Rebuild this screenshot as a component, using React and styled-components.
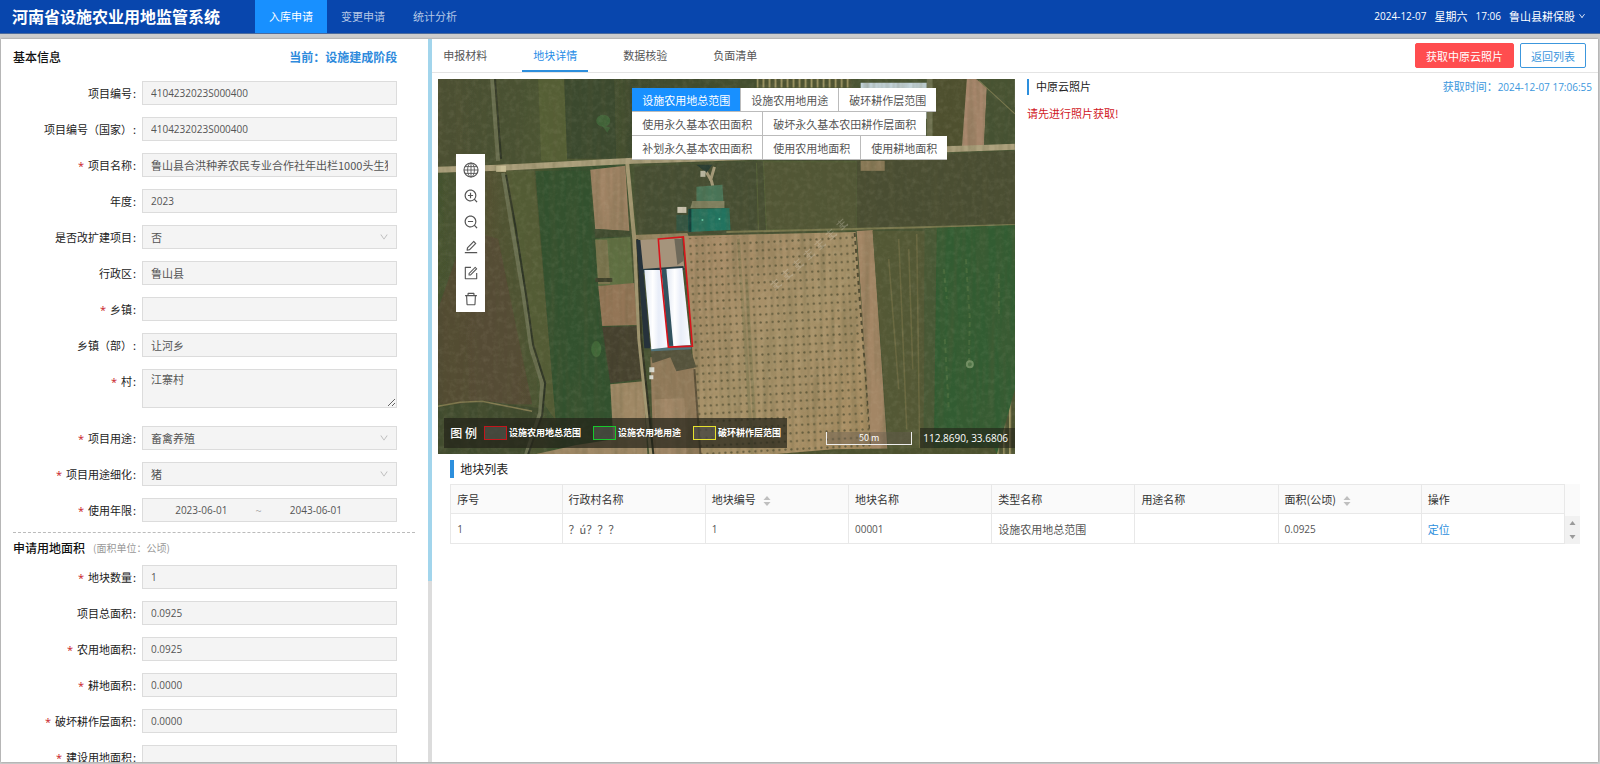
import React from 'react';
import styled, { createGlobalStyle, css } from 'styled-components';
import {
  AiOutlineZoomIn,
  AiOutlineZoomOut,
  AiOutlineEdit,
  AiOutlineForm,
  AiOutlineDelete,
  AiOutlineDown,
} from 'react-icons/ai';

const baseFields = [
  { id: 'code', label: '项目编号', value: '4104232023S000400', numeric: true },
  { id: 'stateCode', label: '项目编号（国家）', value: '4104232023S000400', numeric: true },
  { id: 'name', label: '项目名称', value: '鲁山县合洪种养农民专业合作社年出栏1000头生猪养殖项目', required: true },
  { id: 'year', label: '年度', value: '2023', numeric: true },
  { id: 'rebuild', label: '是否改扩建项目', value: '否', type: 'select' },
  { id: 'district', label: '行政区', value: '鲁山县' },
  { id: 'town', label: '乡镇', value: '', required: true },
  { id: 'townDept', label: '乡镇（部）', value: '让河乡' },
  { id: 'village', label: '村', value: '江寨村', required: true, type: 'textarea' },
  { id: 'usage', label: '项目用途', value: '畜禽养殖', required: true, type: 'select' },
  { id: 'usageDetail', label: '项目用途细化', value: '猪', required: true, type: 'select' },
  { id: 'period', label: '使用年限', value: ['2023-06-01', '2043-06-01'], required: true, type: 'range' },
];

const areaFields = [
  { id: 'count', label: '地块数量', value: '1', required: true, numeric: true },
  { id: 'total', label: '项目总面积', value: '0.0925', numeric: true },
  { id: 'farm', label: '农用地面积', value: '0.0925', required: true, numeric: true },
  { id: 'plough', label: '耕地面积', value: '0.0000', required: true, numeric: true },
  { id: 'damage', label: '破坏耕作层面积', value: '0.0000', required: true, numeric: true },
  { id: 'build', label: '建设用地面积', value: '', required: true, numeric: true },
];

const menus = ['入库申请', '变更申请', '统计分析'];
const tabs = ['申报材料', '地块详情', '数据核验', '负面清单'];

const layerRows = [
  ['设施农用地总范围', '设施农用地用途', '破环耕作层范围'],
  ['使用永久基本农田面积', '破坏永久基本农田耕作层面积'],
  ['补划永久基本农田面积', '使用农用地面积', '使用耕地面积'],
];

const legends = [
  { color: '#c3161c', text: '设施农用地总范围' },
  { color: '#18c82c', text: '设施农用地用途' },
  { color: '#e6e22e', text: '破环耕作层范围' },
];

const columns = [
  { title: '序号', width: '10%' },
  { title: '行政村名称' },
  { title: '地块编号', sorter: true },
  { title: '地块名称' },
  { title: '类型名称' },
  { title: '用途名称' },
  { title: '面积(公顷)', sorter: true },
  { title: '操作' },
];

const Globe = () => (
  <svg width="16" height="16" viewBox="0 0 16 16" fill="none" stroke="currentColor">
    <circle cx="8" cy="8" r="7" strokeWidth="1.2" />
    <ellipse cx="8" cy="8" rx="3.4" ry="7" strokeWidth="0.9" />
    <path d="M8 1v14M1 8h14M2 4.6h12M2 11.4h12" strokeWidth="0.9" />
  </svg>
);

const tools = [
  { name: '全图', icon: <Globe /> },
  { name: '放大', icon: <AiOutlineZoomIn /> },
  { name: '缩小', icon: <AiOutlineZoomOut /> },
  { name: '绘制', icon: <AiOutlineEdit /> },
  { name: '编辑', icon: <AiOutlineForm /> },
  { name: '删除', icon: <AiOutlineDelete /> },
];

const Satellite = () => (
  <SatelliteSvg viewBox="0 0 576 375" preserveAspectRatio="xMidYMid slice" aria-hidden="true">
    <defs>
      <linearGradient id="west" x1="0" x2="1" y1="0" y2="0">
        <stop offset="0" stopColor="#44532f" />
        <stop offset="0.25" stopColor="#525133" />
        <stop offset="0.5" stopColor="#4a5431" />
        <stop offset="0.62" stopColor="#35512e" />
        <stop offset="0.85" stopColor="#36502e" />
        <stop offset="1" stopColor="#435230" />
      </linearGradient>
      <linearGradient id="north" x1="0" x2="1" y1="0" y2="0">
        <stop offset="0" stopColor="#4c5030" />
        <stop offset="0.25" stopColor="#485131" />
        <stop offset="0.5" stopColor="#505a34" />
        <stop offset="0.6" stopColor="#3e4a2d" />
        <stop offset="1" stopColor="#434e2f" />
      </linearGradient>
      <linearGradient id="orchard" x1="0" x2="1" y1="0" y2="1">
        <stop offset="0" stopColor="#a98b67" />
        <stop offset="0.5" stopColor="#a79269" />
        <stop offset="1" stopColor="#aa8e63" />
      </linearGradient>
      <linearGradient id="roof" x1="0" x2="1" y1="0" y2="0">
        <stop offset="0" stopColor="#dfe6f2" />
        <stop offset="0.35" stopColor="#ffffff" />
        <stop offset="0.6" stopColor="#e8edf8" />
        <stop offset="1" stopColor="#fafcff" />
      </linearGradient>
      <pattern id="trees" width="6" height="8" patternUnits="userSpaceOnUse" patternTransform="rotate(-3)">
        <circle cx="3" cy="4" r="1.1" fill="#625a3c" />
      </pattern>
      <pattern id="rows" width="6" height="12" patternUnits="userSpaceOnUse">
        <rect width="6" height="12" fill="#4d5230" />
        <rect width="2" height="12" fill="#9d9564" />
      </pattern>
      <filter id="soft" x="0" y="0" width="100%" height="100%">
        <feGaussianBlur stdDeviation="0.6" />
      </filter>
      <filter id="streaks" x="0" y="0" width="100%" height="100%">
        <feTurbulence type="fractalNoise" baseFrequency="0.16 0.01" numOctaves="2" seed="4" />
        <feColorMatrix values="0 0 0 0 0.1  0 0 0 0 0.1  0 0 0 0 0.04  1.6 0 0 0 -0.6" />
      </filter>
      <filter id="grain" x="0" y="0" width="100%" height="100%">
        <feTurbulence type="fractalNoise" baseFrequency="0.18" numOctaves="3" seed="9" />
        <feColorMatrix values="0 0 0 0 0.85  0 0 0 0 0.8  0 0 0 0 0.6  0 1.4 0 0 -0.6" />
      </filter>
    </defs>
    <g filter="url(#soft)">
      <rect width="576" height="375" fill="#465232" />
      {/* fields north of the road */}
      <path d="M0 0h318v82L0 90z" fill="url(#north)" />
      <path d="M100 0h26l3 82h-26z" fill="#545f35" />
      <path d="M126 0h50l2 80h-49z" fill="#3b492e" />
      <ellipse cx="165" cy="42" rx="7" ry="6" fill="#44703d" opacity="0.7" />
      <path d="M163 46l6 8 3-5" fill="#44703d" opacity="0.6" />
      <path d="M318 0h95v9h-95z" fill="url(#rows)" />
      <path d="M318 9h110v68H318z" fill="#4e5934" />
      <path d="M422 4h66v36h-66z" fill="#c2d2d8" />
      <path d="M488 0h6v70h-6z" fill="#6d7050" />
      <path d="M494 0h34l-5 70h-29z" fill="#4d4f2f" />
      <path d="M528 0h9l11 9-3 61h-22z" fill="#a5856a" />
      <path d="M548 9l28 20v41h-31z" fill="#445132" />
      <path d="M540 2l36 33" stroke="#7d7b50" strokeWidth="1" />
      {/* west side */}
      <path d="M0 93l188-8 14 290H0z" fill="url(#west)" />
      <path d="M28 150l32 10 34 165-94 0V230z" fill="#574834" opacity="0.7" />
      <path d="M68 92h28l22 250-14-20-8-50-20-110z" fill="#535b36" />
      <path d="M97 92h54l10 155 12 60v40h-55z" fill="#32512e" />
      <path d="M0 328l42-7 60 8-14 46H0z" fill="#404b2f" />
      <path d="M0 327l22-4 22-1 50 10" stroke="#827a50" strokeWidth="1.5" fill="none" />
      <ellipse cx="158" cy="270" rx="5" ry="8" fill="#47713c" opacity="0.7" />
      <path d="M152 91l35-4 4 65-34-2z" fill="#a18465" />
      <path d="M156 150l36 2v5l-35 2z" fill="#3c492f" />
      <path d="M157 160l35-2 3 47-35 2z" fill="#5e6f43" />
      <path d="M157 161l12 0 3 44h-12z" fill="#7b7650" />
      <path d="M160 207l36-3 3 42-35 1z" fill="#937556" />
      <path d="M157 199h17v4h-17z" fill="#3d402b" />
      <path d="M164 248l35-1 4 53-31 4z" fill="#44412f" />
      <path d="M172 305l33-3 4 73h-112l40-9 38-6z" fill="#9f8865" />
      {/* centre block */}
      <path d="M196 88l92-4 130-5v72l-130 4-88 0-4-30z" fill="#454e31" />
      <path d="M318 84l2 68M325 83h93v68h-90z" fill="#515636" stroke="#566239" strokeWidth="1" />
      <path d="M418 79l158-7v74l-158 5z" fill="#494e33" />
      <path d="M422 82h24v10h-24z" fill="#8b7a58" />
      <path d="M194 156l55-2 2 5-56 3z" fill="#94835e" />
      <path d="M266 90l7 12 3 12M276 88l-4 14" stroke="#a99d7c" strokeWidth="3" fill="none" />
      <path d="M258 86h16l-6 8z" fill="#253a30" />
      <path d="M262 92h5v6h-5z" fill="#c7c4af" />
      <path d="M258 108l26-2 1 16h-27z" fill="#4a7459" />
      <path d="M254 122h32v7h-34z" fill="#80805f" />
      <path d="M239 128h9v6h-9z" fill="#c9c2ae" />
      <path d="M238 136h12v16h-12z" fill="#365543" />
      <path d="M250 130l41-1 1 22-42 2z" fill="#24735f" />
      <path d="M250 130h3v23h-3z" fill="#183f3a" />
      <circle cx="264" cy="141" r="1" fill="#62d2ae" />
      <circle cx="281" cy="140" r="1" fill="#62d2ae" />
      {/* orchard */}
      <path d="M245 157l172-4 17 222H262z" fill="url(#orchard)" />
      <path d="M248 159l169-4 16 220H262z" fill="url(#trees)" />
      <path d="M300 160l14 215M308 200l8 140" stroke="#7c7a50" strokeWidth="3" opacity="0.4" />
      <path d="M416 154l17 221" stroke="#4f4930" strokeWidth="2" strokeDasharray="4 4" />
      <path d="M418 152l16-1 15 224h-16z" fill="#a38665" />
      <path d="M288 153l288-7" stroke="#7b7a50" strokeWidth="2" fill="none" />
      <path d="M434 152h61l-2 223h-43z" fill="#525935" />
      <path d="M460 160l8 190M470 170l4 120M478 155l3 220M450 180l10 130" stroke="#7c7349" strokeWidth="1.5" opacity="0.6" />
      <path d="M490 149l86-3v229h-88z" fill="#325c30" />
      <path d="M486 149h12l-3 226h-10z" fill="#465835" />
      <path d="M527 180l4 60-1 42M505 190l3 30M506 260l4 70M560 195v40" stroke="#668551" strokeWidth="2" strokeDasharray="5 4" opacity="0.35" fill="none" />
      <circle cx="531" cy="285" r="3" fill="#5d8052" stroke="#8ba579" strokeWidth="2" opacity="0.7" />
      <path d="M576 310v65h-18z" fill="url(#rows)" />
      <path d="M335 375l60-5 160-2 3 7z" fill="#4b512f" />
      {/* yard below the sheds */}
      <path d="M212 278l34-8 10 20 6 85h-47z" fill="#947b5c" />
      <path d="M212 270h40l6 18-20 4-6-14-18 6z" fill="#55523c" />
      <path d="M211 288h5v5h-5zM211 296h4v4h-4z" fill="#dedfd6" />
      <path d="M216 320l30-1 2 56h-30z" fill="#a38868" />
      <path d="M256 290l6 85" stroke="#5b4f38" strokeWidth="2" />
      {/* roads and ditch */}
      <path d="M0 91l60-2 135-7 123-4 120-5 138-5" stroke="#aca07c" strokeWidth="6" fill="none" />
      <path d="M58 87h10v6h-10z" fill="#c9be96" />
      <path d="M189 85l7 75 5 100 12 115" stroke="#a39771" strokeWidth="4" fill="none" />
      <path d="M199 160l4 100 12 115" stroke="#2f3021" strokeWidth="2" fill="none" />
      <path d="M54 0l6 82M65 94l8 50 12 70 8 55 11 35-2 30-14 41" stroke="#6b7051" strokeWidth="4" fill="none" />
      <path d="M57 0l6 80M68 96l9 50 11 70 7 50 12 38-3 32-14 39" stroke="#2f3625" strokeWidth="2" fill="none" />
    </g>
    <rect width="576" height="375" filter="url(#streaks)" opacity="0.4" />
    <rect width="576" height="375" filter="url(#grain)" opacity="0.12" />
    {/* sheds */}
    <g filter="url(#soft)">
      <path d="M201 161l42-2 3 30-43 2z" fill="#a5947c" />
      <path d="M198 161h4l3 30 7 78h-6z" fill="#26313a" />
      <path d="M236 160l8 0 1 22-6 4z" fill="#6e695a" />
      <path d="M204 190l41-3 1 4-41 3z" fill="#283b42" />
      <path d="M222 190h6l8 78h-6z" fill="#31525f" />
      <path d="M212 268l41-3v5l-40 2z" fill="#51747c" />
      <path d="M206 191h17l7 77-17 2z" fill="url(#roof)" />
      <path d="M228 190l16-1 8 77-17 1z" fill="url(#roof)" />
    </g>
    {/* worn survey mark over the orchard */}
    <g stroke="#d8d2c4" strokeWidth="1" opacity="0.3" fill="none">
      {Array.from({ length: 7 }, (_, i) => (
        <path key={i} transform={`translate(${332 + i * 11} ${206 - i * 10}) rotate(-43)`} d="M0 0h9M1 3h7M0 7h9M4-2v10M1 4l7 4" />
      ))}
    </g>
    <path d="M220 160l25-2 9 109-24 1-8-80z" fill="none" stroke="#d8141b" strokeWidth="1.6" />
  </SatelliteSvg>
);

const Control = ({ field }) => {
  const { id, value, type, numeric } = field;

  if (type === 'select') {
    return (
      <SelectWrapper>
        <Select id={id} defaultValue={value} disabled>
          <option>{value}</option>
        </Select>
        <AiOutlineDown />
      </SelectWrapper>
    );
  }
  if (type === 'textarea') {
    return <TextArea id={id} defaultValue={value} readOnly />;
  }
  if (type === 'range') {
    return (
      <Range>
        <RangeInput id={id} defaultValue={value[0]} readOnly />
        <span>~</span>
        <RangeInput aria-label="结束日期" defaultValue={value[1]} readOnly />
      </Range>
    );
  }
  return <Input id={id} defaultValue={value} $numeric={numeric} readOnly />;
};

const Fields = ({ list }) => (
  <FieldList>
    {list.map(field => (
      <Field key={field.id} $tall={field.type === 'textarea'}>
        <Label htmlFor={field.id}>
          {field.required && <Star>*</Star>}
          {field.label}
          <Colon>:</Colon>
        </Label>
        <Control field={field} />
      </Field>
    ))}
  </FieldList>
);

const Sorter = () => (
  <SorterSvg width="8" height="10" viewBox="0 0 8 10">
    <path d="M4 0l3.5 4h-7zM4 10l3.5-4h-7z" fill="currentColor" />
  </SorterSvg>
);

class App extends React.Component {
  state = { menu: 0, tab: 1, layer: layerRows[0][0] };

  render() {
    const { menu, tab, layer } = this.state;

    return (
      <Page>
        <GlobalStyle />
        <Header>
          <Logo>河南省设施农业用地监管系统</Logo>
          <Nav>
            {menus.map((item, i) => (
              <NavButton key={item} type="button" $active={menu === i} onClick={() => this.setState({ menu: i })}>
                {item}
              </NavButton>
            ))}
          </Nav>
          <Account>
            <Num>2024-12-07</Num>
            <span>星期六</span>
            <Num>17:06</Num>
            <UserButton type="button">
              鲁山县耕保股
              <AiOutlineDown />
            </UserButton>
          </Account>
        </Header>
        <Body>
          <Side>
            <Form>
              <FormHeader>
                <Heading>基本信息</Heading>
                <Stage>当前：设施建成阶段</Stage>
              </FormHeader>
              <Fields list={baseFields} />
              <Divider />
              <AreaHeader>
                <Heading>申请用地面积</Heading>
                <Unit>(面积单位：公顷)</Unit>
              </AreaHeader>
              <Fields list={areaFields} />
            </Form>
            <Track>
              <Thumb />
            </Track>
          </Side>
          <Main>
            <TabBar>
              {tabs.map((item, i) => (
                <Tab key={item} type="button" $active={tab === i} onClick={() => this.setState({ tab: i })}>
                  {item}
                </Tab>
              ))}
              <Actions>
                <Button type="button" $danger>获取中原云照片</Button>
                <Button type="button">返回列表</Button>
              </Actions>
            </TabBar>
            <Split>
              <Map>
                <Satellite />
                <Layers>
                  {layerRows.map((row, i) => (
                    <LayerRow key={i}>
                      {row.map(name => (
                        <LayerButton key={name} type="button" $active={layer === name} onClick={() => this.setState({ layer: name })}>
                          {name}
                        </LayerButton>
                      ))}
                    </LayerRow>
                  ))}
                </Layers>
                <ToolBar>
                  {tools.map(tool => (
                    <ToolButton key={tool.name} type="button" aria-label={tool.name}>{tool.icon}</ToolButton>
                  ))}
                </ToolBar>
                <Legend>
                  <LegendTitle>图 例</LegendTitle>
                  {legends.map(item => (
                    <LegendItem key={item.text}>
                      <Swatch $color={item.color} />
                      {item.text}
                    </LegendItem>
                  ))}
                </Legend>
                <Scale>50 m</Scale>
                <Coordinate>112.8690, 33.6806</Coordinate>
              </Map>
              <Photos>
                <PhotoHeader>
                  <PhotoTitle>中原云照片</PhotoTitle>
                  <PhotoTime>
                    获取时间：<Num>2024-12-07 17:06:55</Num>
                  </PhotoTime>
                </PhotoHeader>
                <Warning>请先进行照片获取!</Warning>
              </Photos>
            </Split>
            <Plots>
              <PlotTitle>地块列表</PlotTitle>
              <TableWrapper>
                <TableScroll>
                  <Table>
                    <thead>
                      <tr>
                        {columns.map(col => (
                          <Th key={col.title} width={col.width}>
                            {col.title}
                            {col.sorter && <Sorter />}
                          </Th>
                        ))}
                      </tr>
                    </thead>
                    <tbody>
                      <tr>
                        <Td><Num>1</Num></Td>
                        <Td>？ú？？？</Td>
                        <Td><Num>1</Num></Td>
                        <Td><Num>00001</Num></Td>
                        <Td>设施农用地总范围</Td>
                        <Td />
                        <Td><Num>0.0925</Num></Td>
                        <Td><Link href="#locate">定位</Link></Td>
                      </tr>
                    </tbody>
                  </Table>
                </TableScroll>
                <Gutter>
                  <GutterScroll width="15" height="28" viewBox="0 0 15 28">
                    <path d="M7.500 5l3 4h-6zM7.500 23l3-4h-6z" fill="#9a9a9a" />
                  </GutterScroll>
                </Gutter>
              </TableWrapper>
            </Plots>
          </Main>
        </Body>
      </Page>
    );
  }
}

const GlobalStyle = createGlobalStyle`
  * {
    box-sizing: border-box;
  }
  body {
    margin: 0;
    color: #333;
    font: 11px/16px "Noto Sans CJK SC", sans-serif;
  }
  button, input, select, textarea {
    margin: 0;
    font: inherit;
    color: inherit;
  }
  button {
    padding: 0;
    border: none;
    background: none;
    white-space: nowrap;
    cursor: pointer;
  }
`;

const Page = styled.div`
  display: flex;
  flex-direction: column;
  height: 100vh;
  background-color: #ccc;
`;

const Header = styled.header`
  display: flex;
  flex: none;
  height: 34px;
  padding-right: 14px;
  background-color: #0846ad;
  border-bottom: 1px solid #4b6a9c;
  color: #fff;
`;

const Logo = styled.h1`
  width: 255px;
  margin: 0;
  padding-left: 12px;
  font-size: 16px;
  font-weight: 700;
  line-height: 32px;
  white-space: nowrap;
`;

const Nav = styled.nav`
  display: flex;
`;

const NavButton = styled.button`
  padding: 0 14px 2px;
  background-color: ${props => props.$active ? '#1890ff' : 'transparent'};
  color: ${props => props.$active ? '#fff' : '#b4c7e6'};
`;

const Account = styled.div`
  display: flex;
  align-items: center;
  gap: 8px;
  margin-left: auto;
  padding-bottom: 2px;
`;

const UserButton = styled.button`
  display: flex;
  align-items: center;
  gap: 3px;

  svg {
    width: 8px;
    height: 8px;
  }
`;

const Num = styled.span`
  font-family: "Open Sans", sans-serif;
  font-size: 10px;
`;

const Body = styled.div`
  display: flex;
  flex: 1;
  min-height: 0;
  margin: 5px 2px 2px 1px;
  background-color: #fff;
  box-shadow: 0 0 2px #888;
`;

const Side = styled.aside`
  display: flex;
  flex: 0 0 27%;
  min-width: 0;
`;

const Form = styled.form`
  flex: 1;
  min-width: 0;
  padding: 9px 31px 0 12px;
  overflow-y: auto;
  scrollbar-width: none;
`;

const Track = styled.div`
  flex: none;
  width: 4px;
  background-color: #dcdcdc;
`;

const Thumb = styled.div`
  height: 75%;
  background-color: #a2d5ec;
`;

const FormHeader = styled.div`
  display: flex;
  justify-content: space-between;
  margin-bottom: 15px;
`;

const Heading = styled.h2`
  margin: 0;
  color: #111;
  font-size: 12px;
  font-weight: 500;
  line-height: 18px;
`;

const Stage = styled.div`
  color: #2f8bdc;
  font-size: 12px;
  font-weight: 700;
  line-height: 18px;
`;

const FieldList = styled.div`
  display: flex;
  flex-direction: column;
  gap: 12px;
`;

const Field = styled.div`
  display: flex;
  align-items: flex-start;
  height: ${props => props.$tall ? '45px' : '24px'};
`;

const Label = styled.label`
  flex: none;
  width: 129px;
  padding-right: 6px;
  color: #222;
  line-height: 24px;
  text-align: right;
  white-space: nowrap;
`;

const Star = styled.span`
  margin-right: 4px;
  color: #c8161d;
  font-family: "Open Sans", sans-serif;
`;

const Colon = styled.span`
  margin-left: 1px;
`;

const control = css`
  width: 100%;
  min-width: 0;
  height: 24px;
  padding: 0 8px;
  background-color: #f4f4f4;
  border: 1px solid #dcdcdc;
  border-radius: 0;
  outline: none;
  color: #555;
`;

const Input = styled.input`
  ${control}
  font-family: ${props => props.$numeric ? '"Open Sans", sans-serif' : 'inherit'};
  font-size: ${props => props.$numeric ? '10px' : '11px'};
`;

const TextArea = styled.textarea`
  ${control}
  height: 39px;
  padding: 1px 8px;
`;

const SelectWrapper = styled.div`
  position: relative;
  width: 100%;

  svg {
    position: absolute;
    top: 7px;
    right: 8px;
    width: 10px;
    height: 10px;
    color: #b5b5b5;
  }
`;

const Select = styled.select`
  ${control}
  appearance: none;
  opacity: 1;
`;

const Range = styled.div`
  ${control}
  display: flex;
  align-items: center;
  padding: 0 26px 0 4px;

  span {
    color: #aaa;
  }
`;

const RangeInput = styled.input`
  flex: 1;
  width: 0;
  min-width: 0;
  padding: 0;
  background: none;
  border: none;
  outline: none;
  font-family: "Open Sans", sans-serif;
  font-size: 10px;
  text-align: center;
`;

const Divider = styled.hr`
  margin: 10px -18px 6px 0;
  border: none;
  border-top: 1px dashed #bbb;
`;

const AreaHeader = styled.div`
  display: flex;
  gap: 8px;
  margin-bottom: 8px;
`;

const Unit = styled.span`
  color: #999;
  font-size: 10px;
  line-height: 18px;
`;

const Main = styled.main`
  flex: 1;
  min-width: 0;
`;

const TabBar = styled.div`
  display: flex;
  gap: 24px;
  height: 34px;
  padding-right: 12px;
  border-bottom: 1px solid #e4e4e4;
`;

const Tab = styled.button`
  padding: 0 11px;
  border-bottom: 2px solid ${props => props.$active ? '#2d8fdd' : 'transparent'};
  color: ${props => props.$active ? '#1f8ce6' : '#555'};
`;

const Actions = styled.div`
  display: flex;
  align-items: center;
  gap: 6px;
  margin-left: auto;
`;

const Button = styled.button`
  height: 25px;
  padding: 0 10px;
  border: 1px solid ${props => props.$danger ? '#ff4d4f' : '#3c97dd'};
  border-radius: 2px;
  background-color: ${props => props.$danger ? '#ff4d4f' : '#fff'};
  color: ${props => props.$danger ? '#fff' : '#3c97dd'};
`;

const Split = styled.div`
  display: flex;
  gap: 12px;
  padding: 6px 6px 0;
`;

const Map = styled.div`
  position: relative;
  flex: 0 0 50%;
  height: 375px;
  overflow: hidden;
`;

const SatelliteSvg = styled.svg`
  display: block;
  width: 100%;
  height: 100%;
`;

const Layers = styled.div`
  position: absolute;
  top: 9px;
  left: 194px;
`;

const LayerRow = styled.div`
  display: flex;
`;

const LayerButton = styled.button`
  height: 24px;
  padding: 0 10px;
  background-color: ${props => props.$active ? '#1890ff' : '#fff'};
  border-bottom: 1px solid #bbb;
  color: ${props => props.$active ? '#fff' : '#555'};

  & + & {
    border-left: 1px solid #bbb;
  }
`;

const ToolBar = styled.div`
  position: absolute;
  top: 75px;
  left: 18px;
  display: flex;
  flex-direction: column;
  width: 29px;
  height: 158px;
  padding-top: 3px;
  background-color: #fff;
`;

const ToolButton = styled.button`
  display: flex;
  flex: 1;
  align-items: center;
  justify-content: center;
  color: #555;

  svg {
    width: 16px;
    height: 16px;
  }
`;

const Legend = styled.div`
  position: absolute;
  bottom: 6px;
  left: 6px;
  display: flex;
  align-items: center;
  gap: 12px;
  height: 30px;
  padding: 0 6px;
  background-color: rgba(34, 34, 24, 0.7);
  color: #fff;
`;

const LegendTitle = styled.span`
  margin-right: -5px;
  font-size: 12px;
  font-weight: 500;
`;

const LegendItem = styled.span`
  display: flex;
  align-items: center;
  gap: 2px;
  font-size: 9px;
  font-weight: 700;
  white-space: nowrap;
`;

const Swatch = styled.i`
  width: 23px;
  height: 14px;
  border: 1px solid ${props => props.$color};
  background-color: rgba(128, 128, 128, 0.3);
`;

const Scale = styled.div`
  position: absolute;
  right: 103px;
  bottom: 9px;
  width: 86px;
  height: 13px;
  border: 1px solid #eee;
  border-top: none;
  background-color: rgba(100, 90, 80, 0.4);
  color: #fff;
  font-size: 9px;
  line-height: 12px;
  text-align: center;
`;

const Coordinate = styled.div`
  position: absolute;
  right: 0;
  bottom: 6px;
  padding: 0 7px 0 3px;
  background-color: rgba(34, 34, 24, 0.6);
  color: #fff;
  font-family: "Open Sans", sans-serif;
  font-size: 10px;
  line-height: 20px;
`;

const Photos = styled.section`
  flex: 1;
  min-width: 0;
`;

const PhotoHeader = styled.div`
  display: flex;
  justify-content: space-between;
  line-height: 15px;
`;

const PhotoTitle = styled.h3`
  margin: 0;
  padding-left: 7px;
  border-left: 2px solid #2d8fdd;
  color: #222;
  font-size: 11px;
  font-weight: 400;
`;

const PhotoTime = styled.span`
  color: #3c97dd;
`;

const Warning = styled.p`
  margin: 10px 0 0;
  color: #d0161d;
`;

const Plots = styled.section`
  padding: 6px 18px 0;
`;

const PlotTitle = styled.h3`
  margin: 0 0 6px;
  padding-left: 6px;
  border-left: 4px solid #2d8fdd;
  color: #222;
  font-size: 12px;
  font-weight: 400;
  line-height: 18px;
`;

const TableWrapper = styled.div`
  display: flex;
`;

const TableScroll = styled.div`
  flex: 1;
  min-width: 0;
`;

const Table = styled.table`
  width: 100%;
  table-layout: fixed;
  border-collapse: collapse;
`;

const cell = css`
  height: 29px;
  padding: 0 6px;
  border: 1px solid #e8e8e8;
  font-weight: 400;
  text-align: left;
  white-space: nowrap;
`;

const Th = styled.th`
  ${cell}
  background-color: #fafafa;
  color: #333;
`;

const Td = styled.td`
  ${cell}
  height: 30px;
  color: #555;
`;

const Link = styled.a`
  color: #2d8fdd;
  text-decoration: none;
`;

const SorterSvg = styled.svg`
  margin-left: 7px;
  color: #bfbfbf;
  vertical-align: -2px;
`;

const Gutter = styled.div`
  display: flex;
  flex-direction: column;
  justify-content: flex-end;
  flex: none;
  width: 15px;
  background-color: #fafafa;
`;

const GutterScroll = styled.svg`
  display: block;
  background-color: #f1f1f1;
`;

export default App;
